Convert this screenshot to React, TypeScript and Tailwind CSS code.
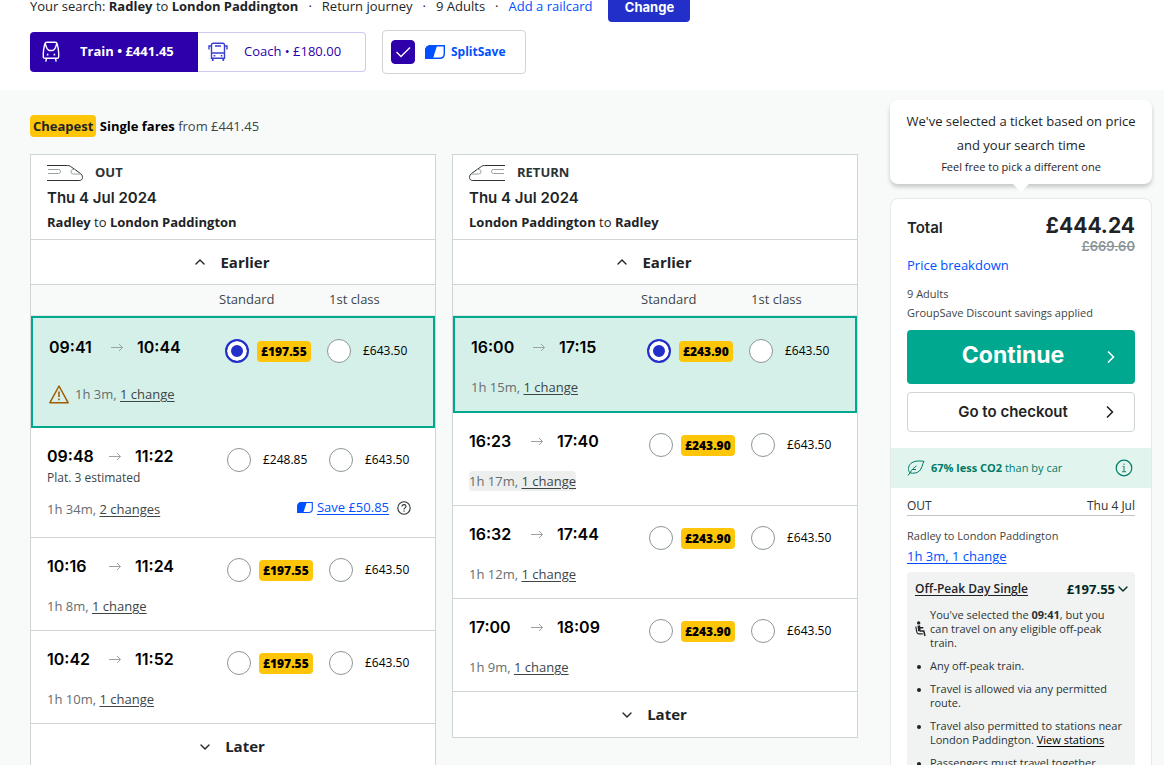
import { useState } from 'react';
import { ChevronDown, ChevronUp, ChevronRight } from 'lucide-react';

type Journey = {
  depart: string;
  arrive: string;
  duration: string;
  changes: string;
  standard: string;
  first: string;
  cheap?: boolean;
  warning?: boolean;
  platform?: string;
  save?: string;
  hovered?: boolean;
};

const outbound: Journey[] = [
  { depart: '09:41', arrive: '10:44', duration: '1h 3m', changes: '1 change', standard: '£197.55', first: '£643.50', cheap: true, warning: true },
  { depart: '09:48', arrive: '11:22', duration: '1h 34m', changes: '2 changes', standard: '£248.85', first: '£643.50', platform: 'Plat. 3 estimated', save: 'Save £50.85' },
  { depart: '10:16', arrive: '11:24', duration: '1h 8m', changes: '1 change', standard: '£197.55', first: '£643.50', cheap: true },
  { depart: '10:42', arrive: '11:52', duration: '1h 10m', changes: '1 change', standard: '£197.55', first: '£643.50', cheap: true },
];

const inbound: Journey[] = [
  { depart: '16:00', arrive: '17:15', duration: '1h 15m', changes: '1 change', standard: '£243.90', first: '£643.50', cheap: true },
  { depart: '16:23', arrive: '17:40', duration: '1h 17m', changes: '1 change', standard: '£243.90', first: '£643.50', cheap: true, hovered: true },
  { depart: '16:32', arrive: '17:44', duration: '1h 12m', changes: '1 change', standard: '£243.90', first: '£643.50', cheap: true },
  { depart: '17:00', arrive: '18:09', duration: '1h 9m', changes: '1 change', standard: '£243.90', first: '£643.50', cheap: true },
];

const TrainIcon = () => (
  <svg width="18" height="22" viewBox="0 0 18 22" fill="none" stroke="currentColor" strokeWidth="1.400" aria-hidden="true">
    <path d="M5 1.200h8c1.200 0 2 .7 2.300 1.900.8 3.300 1.400 6.400 1.400 9.400v3.200c0 1-.6 1.600-1.600 1.600H2.900c-1 0-1.600-.6-1.600-1.600v-3.200c0-3 .6-6.100 1.400-9.400C3 1.900 3.800 1.200 5 1.200z" />
    <path d="M3.200 2.500C4 5.500 5 9.500 7.500 9.500h3c2.500 0 3.500-4 4.300-7" />
    <path d="M4.500 17.500L3.800 20.700M13.500 17.500l.7 3.200" />
    <path d="M4.800 13.700h1.600M11.600 13.700h1.600" strokeWidth="1.700" />
  </svg>
);

const CoachIcon = () => (
  <svg width="20" height="20" viewBox="0 0 20 20" fill="none" stroke="#3a3fd0" strokeWidth="1.400" aria-hidden="true">
    <path d="M3.500 16.300V3c0-1 .7-1.800 1.800-1.800h9.400c1.100 0 1.800.8 1.800 1.800v13.300z" />
    <path d="M3.500 11h13M7 4h6M3.500 4H1v3.500M16.500 4H19v3.500" />
    <path d="M4.700 16.500v2.500M15.300 16.500v2.500" strokeWidth="1.700" />
    <path d="M5.700 13.700h1.600M12.700 13.700h1.600" />
  </svg>
);

const SplitLogo = ({ className }: { className: string }) => (
  <svg viewBox="0 0 20 14" className={className} aria-hidden="true">
    <path d="M6 .7h13.300v7.800c0 2.900-1.900 4.800-4.800 4.800H.7V6C.7 2.700 2.700.7 6 .7z" fill="#fff" stroke="#0050ff" strokeWidth="1.400" />
    <path d="M6 0h6.300L9.200 9.500C8.700 12.500 7.700 14 5.500 14H0V6c0-3.700 2.300-6 6-6z" fill="#0050ff" />
  </svg>
);

const NoseIcon = ({ flip }: { flip?: boolean }) => (
  <svg width="36" height="18" viewBox="0 0 36 18" fill="none" stroke="#2b3335" className={flip ? '-scale-x-100' : ''} aria-hidden="true">
    <path d="M0 1.500h20.500c1.300 0 2.200.3 3.200 1l9.500 6.800c1.500 1.100 2.300 2.400 2.300 4.100 0 2-1.300 3.100-3.300 3.100H0" />
    <path d="M1 5.500h10.500a2 2 0 0 1 0 4H1" stroke="#9aa0a1" />
    <path d="M28 5.500h-1.800a2.200 2.200 0 0 0 0 4.500H34" stroke="#9aa0a1" />
  </svg>
);

const ArrowIcon = () => (
  <svg width="12" height="10" viewBox="0 0 12 10" fill="none" stroke="#9ba3a4" aria-hidden="true">
    <path d="M0 5.500h11.500M8 2L11.500 5.500 8 9" />
  </svg>
);

const WarningIcon = () => (
  <svg width="20" height="19" viewBox="0 0 20 19" fill="none" stroke="#a35a00" strokeWidth="1.500" strokeLinejoin="round" aria-hidden="true">
    <path d="M10 1L19.200 17.800H.8z" />
    <path d="M10 6.500v5.500M10 13.500v1.700" strokeWidth="1.600" />
  </svg>
);

const HelpIcon = () => (
  <svg width="14" height="14" viewBox="0 0 14 14" fill="none" stroke="#2b3335" strokeWidth="1.100" aria-hidden="true">
    <circle cx="7" cy="7" r="6.200" />
    <path d="M5 5.600C5 4.300 5.800 3.600 7 3.600s2 .7 2 1.800c0 1.400-2 1.500-2 3M7 9.500v1.300" />
  </svg>
);

const LeafIcon = () => (
  <svg width="18" height="16" viewBox="0 0 18 16" fill="none" stroke="#007a68" aria-hidden="true">
    <path d="M1 15.500L3 12.800M3 12.800C.7 10.500 1 6.200 3.800 3.500 6.500 1 11 .5 17 1.300c-1 1.600-1.200 3-2 5.200-1.300 3.700-3.500 6-6.800 6.500-2 .3-3.700.3-5.200-.2zM3 12.800c2-3.300 3.500-5 6.500-6.800M5.500 9.500H9" />
  </svg>
);

const InfoIcon = () => (
  <svg width="18" height="18" viewBox="0 0 18 18" fill="none" stroke="#007a68" strokeWidth="1.200" aria-hidden="true">
    <circle cx="9" cy="9" r="7.800" />
    <path d="M7.500 7.500H9v5M7 12.700h4M9 4.600v1.500" stroke="#3c9585" />
  </svg>
);

const SeatIcon = () => (
  <svg width="11" height="16" viewBox="0 0 11 16" fill="none" stroke="#1e2426" strokeWidth="1.500" aria-hidden="true">
    <circle cx="3.700" cy="1.900" r="1.700" fill="#1e2426" stroke="none" />
    <path d="M4.500 6.800h3.800M4.500 10h4.300l1.200 5" />
    <path d="M3.800 4.500l.6 5.500" strokeWidth="2.600" />
    <path d="M.8 5.500l1 5.500c.2 1.200.9 1.900 2 1.900h4" strokeWidth="1.200" />
  </svg>
);

const radioClass =
  'size-6 shrink-0 cursor-pointer appearance-none rounded-full border border-[#8c9597] bg-white checked:border-2 checked:border-[#2230c9] checked:bg-[#2230c9] checked:shadow-[inset_0_0_0_4px_#fff]';

function Fare({ name, price, cheap, checked, onSelect, label }: {
  name: string;
  price: string;
  cheap?: boolean;
  checked: boolean;
  onSelect: () => void;
  label: string;
}) {
  return (
    <label className="flex w-[102px] items-center gap-2">
      <input type="radio" name={name} aria-label={label} checked={checked} onChange={onSelect} className={radioClass} />
      {cheap ? (
        <span className="rounded bg-[#ffc508] px-1 text-xs leading-[21px] font-extrabold text-black">{price}</span>
      ) : (
        <span className="pl-1 text-xs text-black">{price}</span>
      )}
    </label>
  );
}

function JourneyColumn({ direction, from, to, journeys }: {
  direction: 'OUT' | 'RETURN';
  from: string;
  to: string;
  journeys: Journey[];
}) {
  const [picked, setPicked] = useState('0-standard');

  return (
    <section className="min-w-0 flex-1 border border-[#cfd4d4] bg-white">
      <header className="border-b border-[#cfd4d4] px-4 py-1.5">
        <div className="flex h-6 items-center gap-3">
          <NoseIcon flip={direction === 'RETURN'} />
          <span className="text-[13px] font-bold text-[#2b3335]">{direction}</span>
        </div>
        <h2 className="font-['Inter',sans-serif] text-[15px] leading-[26px] font-semibold">Thu 4 Jul 2024</h2>
        <p className="text-[13px] leading-[22px]">
          <strong className="font-bold">{from}</strong> to <strong className="font-bold">{to}</strong>
        </p>
      </header>

      <button className="flex h-[45px] w-full cursor-pointer items-center justify-center gap-3 border-b border-[#cfd4d4] pr-1 text-[15px] font-bold">
        <ChevronUp size={16} strokeWidth={2} />
        Earlier
      </button>

      <div className="flex h-[31px] items-center justify-end border-b border-[#e3e6e6] bg-[#f8faf9] text-[13px] text-[#3d4547]">
        <span className="w-[110px]">Standard</span>
        <span className="w-[106px]">1st class</span>
      </div>

      <ul>
        {journeys.map((j, i) => {
          const selected = picked.startsWith(`${i}-`);
          return (
            <li
              key={j.depart}
              className={`flex justify-between pl-4 ${
                selected ? 'border-2 border-[#00a88f] bg-[#d5f0e9] pt-px' : 'border-b border-[#cfd4d4]'
              }`}
            >
              <div className={`flex flex-col pt-4 ${j.warning ? 'pb-[22px]' : j.save ? 'pb-[18px]' : 'pb-3.5'}`}>
                <div className="flex items-center font-['Inter',sans-serif] text-base leading-6 font-semibold text-black">
                  <time className="w-[62px]">{j.depart}</time>
                  <ArrowIcon />
                  <time className="pl-3.5">{j.arrive}</time>
                </div>
                {j.platform && <p className="text-xs leading-[19px] text-[#3d4547]">{j.platform}</p>}
                <div className={`flex items-center gap-1.5 text-[13px] leading-5 text-[#666e70] ${j.platform ? 'mt-3' : j.warning ? 'mt-[25px]' : 'mt-[18px]'}`}>
                  {j.warning && <WarningIcon />}
                  <p className={j.hovered ? 'rounded bg-[#edefef]' : ''}>
                    {j.duration},{' '}
                    <a href="#journey" className="text-[#3d4547] underline underline-offset-2">{j.changes}</a>
                  </p>
                </div>
              </div>

              <div className="flex flex-col items-end pt-5 pr-1">
                <div className="flex">
                  <Fare
                    name={direction}
                    label={`${j.depart} standard ${j.standard}`}
                    price={j.standard}
                    cheap={j.cheap}
                    checked={picked === `${i}-standard`}
                    onSelect={() => setPicked(`${i}-standard`)}
                  />
                  <Fare
                    name={direction}
                    label={`${j.depart} first class ${j.first}`}
                    price={j.first}
                    checked={picked === `${i}-first`}
                    onSelect={() => setPicked(`${i}-first`)}
                  />
                </div>
                {j.save && (
                  <div className="mt-[26px] flex items-center gap-1 pr-5">
                    <SplitLogo className="h-[11px] w-4" />
                    <a href="#splitsave" className="text-[13px] text-[#0050ff] underline underline-offset-2">{j.save}</a>
                    <button aria-label="About SplitSave" className="ml-1 cursor-pointer">
                      <HelpIcon />
                    </button>
                  </div>
                )}
              </div>
            </li>
          );
        })}
      </ul>

      <button className="flex h-[45px] w-full cursor-pointer items-center justify-center gap-3 pr-1 text-[15px] font-bold">
        <ChevronDown size={16} strokeWidth={2} />
        Later
      </button>
    </section>
  );
}

function Basket() {
  return (
    <aside className="w-[262px] shrink-0">
      <div className="relative rounded-lg bg-white px-2 pt-[9px] pb-[7px] text-center shadow-[0_3px_4px_rgba(0,0,0,0.2)]">
        <p className="text-[13px] leading-6">We've selected a ticket based on price and your search time</p>
        <p className="text-[11px] leading-5">Feel free to pick a different one</p>
        <span className="absolute top-full left-1/2 h-2 w-4 -translate-x-1/2 bg-white [clip-path:polygon(0_0,100%_0,50%_100%)]" />
      </div>

      <div className="mt-3.5 rounded-lg border border-[#e6e9e9] bg-white">
        <div className="px-4 pt-[13px]">
          <div className="flex justify-between font-['Inter',sans-serif]">
            <h2 className="text-[15px] leading-8 font-semibold">Total</h2>
            <div className="text-right">
              <p className="text-[21px] leading-7 font-bold">£444.24</p>
              <p className="text-[13px] leading-3 font-semibold text-[#8c9597] line-through">£669.60</p>
            </div>
          </div>
          <a href="#breakdown" className="mt-px block text-[13px] leading-6 text-[#0050ff]">Price breakdown</a>
          <div className="mt-[7px] text-[11px] leading-[19px] text-[#3d4547]">
            <p>9 Adults</p>
            <p>GroupSave Discount savings applied</p>
          </div>
          <button className="mt-2 flex h-[54px] w-full cursor-pointer items-center rounded bg-[#00a88f] pr-3.5 pb-1 pl-[18px] font-['Inter',sans-serif] text-[23px] font-bold text-white">
            <span className="flex-1">Continue</span>
            <ChevronRight size={20} strokeWidth={2} className="mt-1" />
          </button>
          <button className="mt-2 flex h-10 w-full cursor-pointer items-center rounded border border-[#cfd4d4] pr-3.5 pl-[18px] font-['Inter',sans-serif] text-[15px] font-semibold">
            <span className="flex-1">Go to checkout</span>
            <ChevronRight size={20} strokeWidth={2} />
          </button>
        </div>

        <div className="mt-4 flex h-10 items-center gap-1.5 bg-[#e1f5ee] pr-[18px] pl-4 text-[11px] text-[#007a68]">
          <LeafIcon />
          <p className="flex-1">
            <strong className="font-bold">67% less CO2</strong> than by car
          </p>
          <button aria-label="About CO2 savings" className="cursor-pointer">
            <InfoIcon />
          </button>
        </div>

        <div className="px-4 pt-2">
          <div className="flex justify-between border-b border-[#bfc4c4] text-xs leading-[19px] text-[#2b3335]">
            <span>OUT</span>
            <span>Thu 4 Jul</span>
          </div>
          <p className="mt-2.5 text-[11px] leading-5 text-[#3d4547]">Radley to London Paddington</p>
          <a href="#journey" className="block text-[13px] leading-5 text-[#0050ff] underline underline-offset-2">1h 3m, 1 change</a>

          <div className="mt-1.5 rounded-t bg-[#f1f3f3] pt-2 pr-1 pb-10 pl-2">
            <div className="flex items-center justify-between leading-[18px] text-[#1e2426]">
              <a href="#ticket" className="text-xs font-semibold underline underline-offset-2">Off-Peak Day Single</a>
              <button className="flex cursor-pointer items-center text-[13px] font-bold text-[#00281e]">
                £197.55
                <ChevronDown size={16} />
              </button>
            </div>
            <ul className="mt-2.5 flex flex-col gap-[9px] text-[11px] leading-[14px] text-[#2b3335]">
              <li className="flex items-center gap-1 pr-3">
                <SeatIcon />
                <p className="flex-1">
                  You've selected the <strong className="font-bold">09:41</strong>, but you can travel on any eligible off-peak train.
                </p>
              </li>
              {[
                'Any off-peak train.',
                'Travel is allowed via any permitted route.',
                'Travel also permitted to stations near London Paddington.',
                'Passengers must travel together',
              ].map((rule, i) => (
                <li key={rule} className="flex gap-[9px]">
                  <span className="mt-1.5 ml-0.5 size-1 shrink-0 rounded-full bg-[#1e2426]" />
                  <p>
                    {rule}
                    {i === 2 && (
                      <>
                        {' '}
                        <a href="#stations" className="text-black underline underline-offset-2">View stations</a>
                      </>
                    )}
                  </p>
                </li>
              ))}
            </ul>
          </div>
        </div>
      </div>
    </aside>
  );
}

export default function App() {
  return (
    <div className="h-screen overflow-hidden bg-[#f8faf9] font-['Open_Sans',sans-serif] text-[#1e2426]">
      <header className="bg-white px-[30px] pb-4">
        <div className="flex items-start">
          <p className="text-[13px] leading-3">
            Your search: <strong className="font-bold">Radley</strong> to <strong className="font-bold">London Paddington</strong>
            <span className="px-2.5">·</span>
            Return journey
            <span className="px-2.5">·</span>
            9 Adults
            <span className="px-2.5">·</span>
            <a href="#railcard" className="text-[#0050ff]">Add a railcard</a>
          </p>
          <button className="ml-4 h-[22px] w-[82px] cursor-pointer rounded-b bg-[#2230c9] pb-2 font-['Inter',sans-serif] text-[13px] leading-3 font-bold text-white">
            Change
          </button>
        </div>

        <div className="mt-2 flex items-center gap-4">
          <div className="flex h-10 text-[13px]">
            <button className="flex w-[168px] cursor-pointer items-center gap-5 rounded-l bg-[#2d00ac] pl-3 font-bold text-white">
              <TrainIcon />
              Train • £441.45
            </button>
            <button className="flex w-[168px] cursor-pointer items-center gap-4 rounded-r border border-l-0 border-[#d0c8f5] pl-2.5 text-[#2d00ac]">
              <CoachIcon />
              Coach • £180.00
            </button>
          </div>
          <label className="flex h-11 w-36 cursor-pointer items-center gap-2.5 rounded border border-[#cfd4d4] px-2">
            <span className="grid size-6">
              <input type="checkbox" defaultChecked className="peer col-start-1 row-start-1 size-6 appearance-none rounded border border-[#2d00ac] bg-white checked:bg-[#2d00ac]" />
              <svg viewBox="0 0 24 24" fill="none" stroke="#fff" strokeWidth="1.300" className="pointer-events-none col-start-1 row-start-1 size-6" aria-hidden="true">
                <path d="M5.500 12l4.500 4.500L19 7.500" />
              </svg>
            </span>
            <SplitLogo className="h-3.5 w-5" />
            <span className="-ml-1 text-xs font-bold text-[#0050ff]">SplitSave</span>
          </label>
        </div>
      </header>

      <main className="flex items-start gap-8 pt-2.5 pr-3 pl-[30px]">
        <div className="min-w-0 flex-1 pt-[15px]">
          <p className="text-[13px] leading-[22px] text-[#3d4547]">
            <span className="inline-block rounded bg-[#ffc508] px-[3px] font-bold text-[#1e2426]">Cheapest</span>{' '}
            <strong className="font-bold text-black">Single fares</strong> from £441.45
          </p>
          <div className="mt-[17px] flex items-start gap-4">
            <JourneyColumn direction="OUT" from="Radley" to="London Paddington" journeys={outbound} />
            <JourneyColumn direction="RETURN" from="London Paddington" to="Radley" journeys={inbound} />
          </div>
        </div>
        <Basket />
      </main>
    </div>
  );
}
